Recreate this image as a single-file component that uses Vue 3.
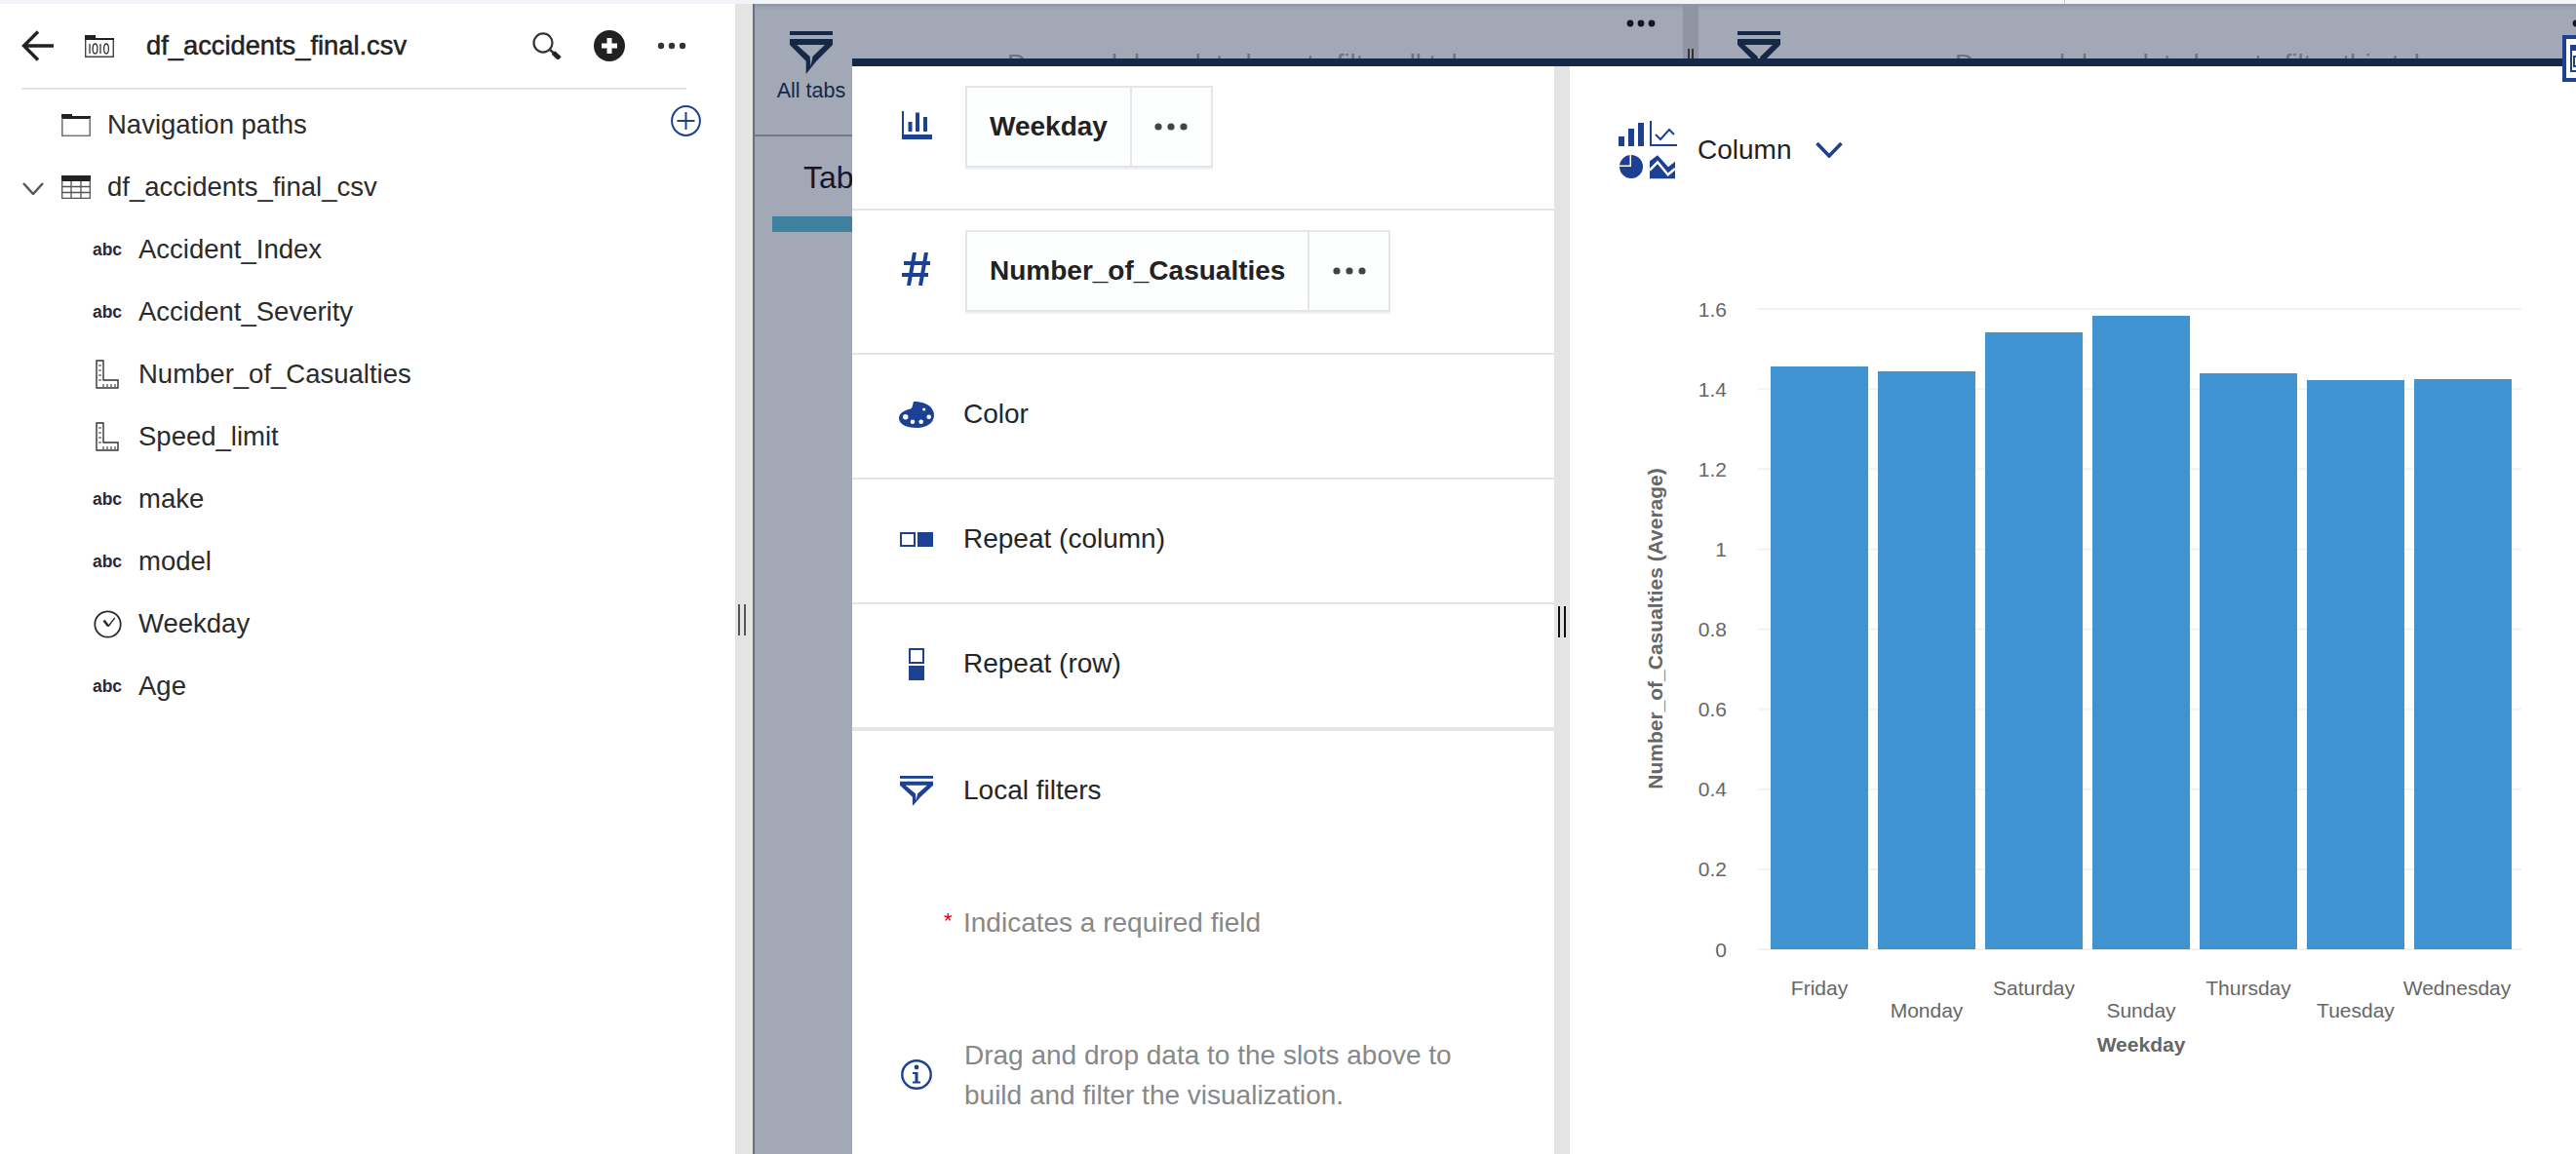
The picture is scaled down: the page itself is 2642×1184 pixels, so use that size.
<template>
  <div class="app">
    <div class="top-strip"><span class="strip-tick"></span></div>
    <div class="workspace">
      <aside class="data-panel">
        <header class="data-head">
          <svg class="back" width="33" height="32" viewBox="0 0 33 32"><path d="M33 16H3M17 1.5 2.5 16 17 30.5" fill="none" stroke="#222" stroke-width="3.4"/></svg>
          <svg class="file-icon" width="30" height="23" viewBox="0 0 30 23">
            <path d="M0 0h11v3h19v2H0z" fill="#222"/>
            <path d="M.7 5v17.3h28.6V5" fill="none" stroke="#444" stroke-width="1.4"/>
            <path d="M5 9v10M16 9v10" stroke="#333" stroke-width="1.3"/>
            <ellipse cx="10.5" cy="14" rx="2.4" ry="5" fill="none" stroke="#333" stroke-width="1.3"/>
            <ellipse cx="22" cy="14" rx="2.4" ry="5" fill="none" stroke="#333" stroke-width="1.3"/>
          </svg>
          <span class="data-title">df_accidents_final.csv</span>
          <svg class="search" width="30" height="28" viewBox="0 0 30 28">
            <ellipse cx="11" cy="11" rx="9.5" ry="9.6" fill="none" stroke="#333" stroke-width="2.2"/>
            <path d="M18 18 23 22.500" stroke="#333" stroke-width="2.4"/>
            <path d="M21.500 21 28 27" stroke="#222" stroke-width="5"/>
          </svg>
          <svg class="add" width="32" height="32" viewBox="0 0 32 32">
            <circle cx="16" cy="16" r="16" fill="#222"/>
            <path d="M16 8v16M8 16h16" stroke="#fff" stroke-width="5"/>
          </svg>
          <svg class="dots" width="30" height="8" viewBox="0 0 30 8"><circle cx="4" cy="4" r="3.2"/><circle cx="15" cy="4" r="3.2"/><circle cx="26" cy="4" r="3.2"/></svg>
        </header>

        <div class="tree-row">
          <svg width="30" height="23" viewBox="0 0 30 23">
            <path d="M0 0h11v2h19v3H0z" fill="#222"/>
            <path d="M.8 4v18.2h28.4V4" fill="none" stroke="#777" stroke-width="1.6"/>
          </svg>
          <span>Navigation paths</span>
          <svg class="nav-add" width="31" height="32" viewBox="0 0 31 32">
            <ellipse cx="15.5" cy="16" rx="14.4" ry="14.9" fill="none" stroke="#1c4193" stroke-width="2"/>
            <path d="M15.5 7v18M6.5 16h18" stroke="#1c4193" stroke-width="2"/>
          </svg>
        </div>
        <div class="tree-row">
          <svg class="tree-chevron" width="22" height="13" viewBox="0 0 22 13"><path d="M1 1 11 12 21 1" fill="none" stroke="#555" stroke-width="2.4"/></svg>
          <svg width="30" height="24" viewBox="0 0 30 24">
            <rect width="30" height="6" fill="#222"/>
            <path d="M.7 5v18.3h28.6V5M0 11.5h30M0 17.5h30M10 6v18M20 6v18" fill="none" stroke="#555" stroke-width="1.3"/>
          </svg>
          <span>df_accidents_final_csv</span>
        </div>

        <div v-for="field in fields" :key="field.name" class="field-row">
          <span class="field-icon">
            <b v-if="field.kind === 'abc'" class="abc">abc</b>
            <svg v-else-if="field.kind === 'measure'" width="24" height="30" viewBox="0 0 24 30">
              <path d="M1 1h7v20h15v8H1z" fill="none" stroke="#333" stroke-width="1.4"/>
              <path d="M3 6h3M3 11h3M3 16h3M3 21h3M8 25v3M12 25v3M16 25v3M20 25v3" stroke="#333" stroke-width="1.1"/>
            </svg>
            <svg v-else width="29" height="29" viewBox="0 0 29 29">
              <circle cx="14.5" cy="14.5" r="13.2" fill="none" stroke="#2b2b2b" stroke-width="1.8"/>
              <path d="M15.2 16.500 21.800 7.800" fill="none" stroke="#2b2b2b" stroke-width="1.4"/>
              <path d="M10.500 10.500 15.200 16.500" fill="none" stroke="#2b2b2b" stroke-width="2.600"/>
            </svg>
          </span>
          <span>{{ field.name }}</span>
        </div>
      </aside>

      <div class="splitter">
        <span class="grip"></span>
      </div>

      <main class="canvas">
        <div class="filter-bar">
          <section class="filter-group first">
            <div class="filter-col">
              <svg class="funnel" width="44" height="44" viewBox="0 0 44 44">
                <rect width="44" height="4"/>
                <path fill-rule="evenodd" d="M0 8h44v6L27.300 30.700 16.700 44V30.700L0 14zM7.300 14H36L23.500 26 21.500 36 20.700 26z"/>
              </svg>
              <span class="filter-label">All tabs</span>
            </div>
            <p class="filter-msg">Drag and drop data here to filter all tabs</p>
            <svg class="bar-dots" width="32" height="8" viewBox="0 0 32 8"><circle cx="5" cy="4" r="3.4"/><circle cx="16" cy="4" r="3.4"/><circle cx="27" cy="4" r="3.4"/></svg>
          </section>
          <div class="filter-band"><span class="band-grip"></span></div>
          <section class="filter-group second">
            <div class="filter-col">
              <svg class="funnel" width="44" height="44" viewBox="0 0 44 44">
                <rect width="44" height="4"/>
                <path fill-rule="evenodd" d="M0 8h44v6L27.300 30.700 16.700 44V30.700L0 14zM7.300 14H36L23.500 26 21.500 36 20.700 26z"/>
              </svg>
            </div>
            <p class="filter-msg">Drag and drop data here to filter this tab</p>
            <svg class="bar-dots" width="32" height="8" viewBox="0 0 32 8"><circle cx="5" cy="4" r="3.4"/><circle cx="16" cy="4" r="3.4"/><circle cx="27" cy="4" r="3.4"/></svg>
          </section>
        </div>
        <div class="tab-item">Tab 1</div>

        <div class="modal">
          <div class="slots">
            <div class="slot-row pill-row">
              <span class="slot-icon lift">
                <svg width="31" height="29" viewBox="0 0 31 29">
                  <g fill="#1c4193"><rect width="2" height="29"/><rect x="6.5" y="11" width="4" height="10"/><rect x="14" y="1.5" width="4" height="19.5"/><rect x="22" y="6" width="4" height="15"/><rect y="24" width="31" height="5"/></g>
                </svg>
              </span>
              <div class="pill"><span class="pill-name">Weekday</span><span class="pill-more"><svg width="36" height="8" viewBox="0 0 36 8"><circle cx="5" cy="4" r="3.6"/><circle cx="18" cy="4" r="3.6"/><circle cx="31" cy="4" r="3.6"/></svg></span></div>
            </div>
            <div class="slot-row pill-row">
              <span class="slot-icon lift">
                <svg width="30" height="34" viewBox="0 0 30 34">
                  <path d="M13 0 7 34M25 0 19 34M2 11h27M0 23h27" fill="none" stroke="#1c4193" stroke-width="4"/>
                </svg>
              </span>
              <div class="pill"><span class="pill-name">Number_of_Casualties</span><span class="pill-more"><svg width="36" height="8" viewBox="0 0 36 8"><circle cx="5" cy="4" r="3.6"/><circle cx="18" cy="4" r="3.6"/><circle cx="31" cy="4" r="3.6"/></svg></span></div>
            </div>
            <div class="slot-row">
              <span class="slot-icon">
                <svg width="36" height="27" viewBox="0 0 36 27">
                  <path fill="#1c4193" d="M15 0C26-.5 36 5 36 14c0 8-8 13-17 13C9 27 0 24 0 17c0-5 6-8.500 12-9.500 2-1 2-4.500 3-7.500z"/>
                  <g fill="#fff"><circle cx="25.700" cy="8" r="1.600"/><circle cx="6.700" cy="15.700" r="2.700"/><circle cx="14" cy="20.700" r="2.300"/><circle cx="22.700" cy="20.700" r="2.300"/><circle cx="30.700" cy="15.700" r="2.300"/></g>
                </svg>
              </span>
              <span class="slot-name">Color</span>
            </div>
            <div class="slot-row">
              <span class="slot-icon">
                <svg width="34" height="15" viewBox="0 0 34 15">
                  <rect x="1" y="1" width="14" height="13" fill="#fff" stroke="#1c4193" stroke-width="2"/>
                  <rect x="18" width="16" height="15" fill="#1c4193"/>
                </svg>
              </span>
              <span class="slot-name">Repeat (column)</span>
            </div>
            <div class="slot-row last-axis">
              <span class="slot-icon">
                <svg width="16" height="33" viewBox="0 0 16 33">
                  <rect x="1" y="1" width="14" height="14" fill="#fff" stroke="#1c4193" stroke-width="2"/>
                  <rect y="18" width="16" height="15" fill="#1c4193"/>
                </svg>
              </span>
              <span class="slot-name">Repeat (row)</span>
            </div>
            <div class="slot-row plain">
              <span class="slot-icon">
                <svg width="34" height="31" viewBox="0 0 44 44" preserveAspectRatio="none" fill="#1c4193">
                  <rect width="44" height="4"/>
                  <path fill-rule="evenodd" d="M0 8h44v6L27.300 30.700 16.700 44V30.700L0 14zM7.300 14H36L23.500 26 21.500 36 20.700 26z"/>
                </svg>
              </span>
              <span class="slot-name">Local filters</span>
            </div>
            <p class="required"><span class="star">*</span>Indicates a required field</p>
            <div class="hint">
              <span class="slot-icon">
                <svg width="32" height="31" viewBox="0 0 32 31">
                  <ellipse cx="16" cy="15.500" rx="14.700" ry="14.300" fill="none" stroke="#1c4193" stroke-width="2.400"/>
                  <circle cx="16" cy="8" r="2.400" fill="#1c4193"/>
                  <path d="M12 13h5.500v9.500H20v2h-8v-2h2.500V15H12z" fill="#1c4193"/>
                </svg>
              </span>
              <p>Drag and drop data to the slots above to<br>build and filter the visualization.</p>
            </div>
          </div>

          <div class="modal-split"><span class="grip black"></span></div>

          <div class="preview">
            <div class="chart-type">
              <svg width="61" height="60" viewBox="0 0 61 60" fill="#1c4193">
                <rect y="16" width="6" height="10"/><rect x="10" y="8" width="6" height="18"/><rect x="20" y="2" width="6" height="24"/>
                <path d="M33 0v25h27M38 14l5 5 9-10 5 5" fill="none" stroke="#1c4193" stroke-width="2"/>
                <path d="M13 35a12 12 0 1 1-12 12h12zM11.500 35v10.500H1a12 12 0 0 1 10.500-10.500z"/>
                <path d="M32 41.300 40 35.300 51 47.300 58 41.700V59.300H32z"/>
                <path d="M32 50.700 40 42.300 50.700 55.300 58 49" fill="none" stroke="#fff" stroke-width="2.500"/>
              </svg>
              <span class="type-name">Column</span>
              <svg class="type-chevron" width="28" height="16" viewBox="0 0 28 16"><path d="M1.500 1 14 14 26.500 1" fill="none" stroke="#1c4193" stroke-width="3.600"/></svg>
            </div>
            <svg class="chart" width="1032" height="1000" viewBox="0 0 1032 1000">
              <g v-for="t in ticks" :key="t.label">
                <line x1="193" x2="976" :y1="t.y" :y2="t.y" stroke="#f2f2f2" stroke-width="2"/>
                <text x="161" :y="t.y + 7.500" text-anchor="end" class="tick">{{ t.label }}</text>
              </g>
              <rect v-for="b in bars" :key="b.day" :x="b.x" :y="b.top" width="100" :height="790 - b.top" fill="#3e93d0"/>
              <text v-for="b in bars" :key="'l' + b.day" :x="b.lx" :y="b.ly" text-anchor="middle" class="tick">{{ b.day }}</text>
              <text x="586" y="895" text-anchor="middle" class="axis-title">Weekday</text>
              <text transform="translate(94.500 461) rotate(-90)" text-anchor="middle" class="axis-title">Number_of_Casualties (Average)</text>
            </svg>
          </div>
        </div>
      </main>
    </div>

    <div class="side-tab">
      <svg width="14" height="48" viewBox="0 0 14 48">
        <path d="M14 2H2v44h12" fill="#fff" stroke="#1c4193" stroke-width="4"/>
        <path d="M14 11H9v26h5" fill="none" stroke="#1c4193" stroke-width="2"/>
        <rect x="8" y="10" width="6" height="6" fill="#1c4193"/>
        <path d="M14 22h-2v10h2" fill="none" stroke="#1c4193" stroke-width="2"/>
      </svg>
    </div>
  </div>
</template>

<script setup>
const fields = [
  { name: 'Accident_Index', kind: 'abc' },
  { name: 'Accident_Severity', kind: 'abc' },
  { name: 'Number_of_Casualties', kind: 'measure' },
  { name: 'Speed_limit', kind: 'measure' },
  { name: 'make', kind: 'abc' },
  { name: 'model', kind: 'abc' },
  { name: 'Weekday', kind: 'time' },
  { name: 'Age', kind: 'abc' }
]

// plot area is 0 at y=790 and 1.6 at y=133 inside the chart svg
const ticks = ['0', '0.2', '0.4', '0.6', '0.8', '1', '1.2', '1.4', '1.6'].map((label, i) => ({
  label,
  y: 790 - i * 82.125
}))

const bars = [
  { day: 'Friday', top: 192 },
  { day: 'Monday', top: 197 },
  { day: 'Saturday', top: 157 },
  { day: 'Sunday', top: 140 },
  { day: 'Thursday', top: 199 },
  { day: 'Tuesday', top: 206 },
  { day: 'Wednesday', top: 205 }
].map((b, i) => ({
  ...b,
  x: 206 + i * 110,
  lx: 256 + i * 110 - (i === 6 ? 6 : 0),
  ly: i % 2 ? 860 : 837
}))
</script>

<style>
html, body {
  margin: 0;
  background: #fff;
}
</style>

<style scoped>
.app {
  position: relative;
  width: 2642px;
  height: 1184px;
  overflow: hidden;
  display: flex;
  flex-direction: column;
  background: #fff;
  color: #2b2b2b;
  font-family: "Liberation Sans", Arial, sans-serif;
  font-size: 27.5px;
}

.top-strip {
  position: relative;
  height: 4px;
  flex: none;
  background: #f2f4fa;
}

.strip-tick {
  position: absolute;
  left: 2117px;
  top: 0;
  width: 1px;
  height: 4px;
  background: #c8c9cc;
}

.workspace {
  flex: 1;
  display: flex;
  min-height: 0;
}

/* data tree */
.data-panel {
  width: 754px;
  flex: none;
}

.data-head {
  height: 86px;
  margin: 0 50px 0 22px;
  display: flex;
  align-items: center;
  border-bottom: 2px solid #e5e5e5;
}

.file-icon {
  margin-left: 32px;
}

.data-title {
  margin-left: 33px;
  font-size: 27.3px;
  -webkit-text-stroke: 0.5px #222;
  color: #222;
}

.search {
  margin-left: auto;
}

.add {
  margin-left: 33px;
}

.dots {
  margin-left: 33px;
  fill: #333;
}

.tree-row {
  height: 64px;
  padding: 0 35px 0 63px;
  display: flex;
  align-items: center;
  gap: 17px;
  position: relative;
}

.tree-row:first-of-type {
  margin-top: 4px;
}

.tree-chevron {
  position: absolute;
  left: 23px;
  top: 27px;
}

.nav-add {
  margin-left: auto;
  margin-bottom: 8px;
}

.field-row {
  height: 64px;
  padding-left: 95px;
  display: flex;
  align-items: center;
  gap: 17px;
}

.field-icon {
  width: 30px;
  display: flex;
  justify-content: center;
}

.abc {
  font-size: 17.5px;
  color: #2b2b2b;
}

.splitter {
  width: 18px;
  flex: none;
  position: relative;
  background: #e4e4e4;
}

.grip {
  position: absolute;
  left: 3px;
  top: 616px;
  width: 8px;
  height: 32px;
  box-sizing: border-box;
  border-left: 2px solid #555;
  border-right: 2px solid #555;
}

.grip.black {
  left: 4px;
  top: 554px;
  border-color: #111;
}

/* dashboard behind the dialog */
.canvas {
  flex: 1;
  min-width: 0;
  position: relative;
  overflow: hidden;
  border-left: 2px solid #6b7079;
  background: #a2a8b5;
  box-shadow: inset 0 5px 4px -3px rgba(40, 45, 60, 0.18);
}

.filter-bar {
  height: 134px;
  display: flex;
  border-bottom: 2px solid #757b86;
}

.filter-group {
  flex: none;
  display: flex;
  align-items: flex-start;
  position: relative;
}

.filter-group.first {
  width: 952px;
}

.filter-group.second {
  width: 900px;
}

.filter-col {
  width: 116px;
  padding-top: 28px;
  display: flex;
  flex-direction: column;
  align-items: center;
  gap: 2px;
  flex: none;
}

.second .filter-col {
  width: 124px;
}

.funnel {
  fill: #152848;
}

.filter-label {
  font-size: 21.5px;
  line-height: 30px;
  color: #152848;
}

.filter-msg {
  margin: 46px 0 0 143px;
  color: #6e7380;
  white-space: nowrap;
}

.second .filter-msg {
  margin-left: 139px;
}

.bar-dots {
  position: absolute;
  right: 27px;
  top: 16px;
  fill: #111726;
}

.second .bar-dots {
  right: -27px;
}

.filter-band {
  width: 16px;
  flex: none;
  position: relative;
  background: #8f95a3;
}

.band-grip {
  position: absolute;
  left: 5px;
  top: 46px;
  width: 6px;
  height: 12px;
  box-sizing: border-box;
  border-left: 2px solid #333;
  border-right: 2px solid #333;
}

.tab-item {
  width: 300px;
  margin: 24px 0 0 18px;
  padding: 0 0 21px 32px;
  box-sizing: border-box;
  border-bottom: 16px solid #3e829f;
  font-size: 32px;
  line-height: 37px;
  color: #14182a;
}

/* customise dialog */
.modal {
  position: absolute;
  left: 100px;
  right: 0;
  top: 56px;
  bottom: 0;
  display: flex;
  border-top: 8px solid #152848;
  background: #fff;
  font-size: 28px;
}

.slots {
  width: 720px;
  flex: none;
}

.slot-row {
  height: 122px;
  padding: 0 0 4px 32px;
  display: flex;
  align-items: center;
  border-bottom: 2px solid #e5e5e5;
}

.pill-row {
  height: 126px;
  padding: 20px 0 0 32px;
  align-items: flex-start;
}

.last-axis {
  border-bottom-width: 4px;
}

.plain {
  border-bottom: 0;
}

.slot-icon {
  width: 68px;
  margin-right: 16px;
  flex: none;
  display: flex;
  justify-content: center;
}

.slot-icon svg {
  display: block;
}

.slot-name {
  margin-left: -2px;
  color: #262626;
}

.lift {
  height: 86px;
  align-items: center;
  margin-top: -3px;
}

.pill {
  display: flex;
  height: 84px;
  box-sizing: border-box;
  border: 2px solid #e6e6e6;
  border-bottom-color: #e4e4ea;
  box-shadow: 0 2px 0 #eef1f7;
  background: #fdfefe;
  font-weight: 700;
  color: #222;
}

.pill-name {
  padding: 0 23px;
  display: flex;
  align-items: center;
  border-right: 2px solid #e6e6e6;
}

.pill-more {
  width: 81px;
  display: flex;
  align-items: center;
  justify-content: center;
  fill: #444;
}

.required {
  margin: 55px 0 0 94px;
  position: relative;
  line-height: 32px;
  padding-left: 20px;
  color: #888;
}

.star {
  position: absolute;
  left: 0;
  top: -2px;
  font-size: 22px;
  color: #d8001f;
}

.hint {
  margin-top: 100px;
  padding-left: 32px;
  display: flex;
  align-items: center;
  color: #888;
}

.hint .slot-icon {
  margin-bottom: 2px;
}

.hint p {
  margin: 0 0 0 -1px;
  line-height: 40.5px;
}

.modal-split {
  width: 16px;
  flex: none;
  position: relative;
  background: #e4e4e4;
}

.preview {
  flex: 1;
  min-width: 0;
}

.chart-type {
  height: 60px;
  padding: 56px 0 0 50px;
  display: flex;
  align-items: center;
}

.type-name {
  margin-left: 20px;
  color: #222;
}

.type-chevron {
  margin-left: 25px;
}

.chart {
  display: block;
}

.tick {
  font-size: 21px;
  fill: #666;
}

.axis-title {
  font-size: 21px;
  font-weight: 700;
  fill: #666;
}

.side-tab {
  position: absolute;
  right: 0;
  top: 36px;
  width: 14px;
  height: 48px;
}

.side-tab svg {
  display: block;
}
</style>
